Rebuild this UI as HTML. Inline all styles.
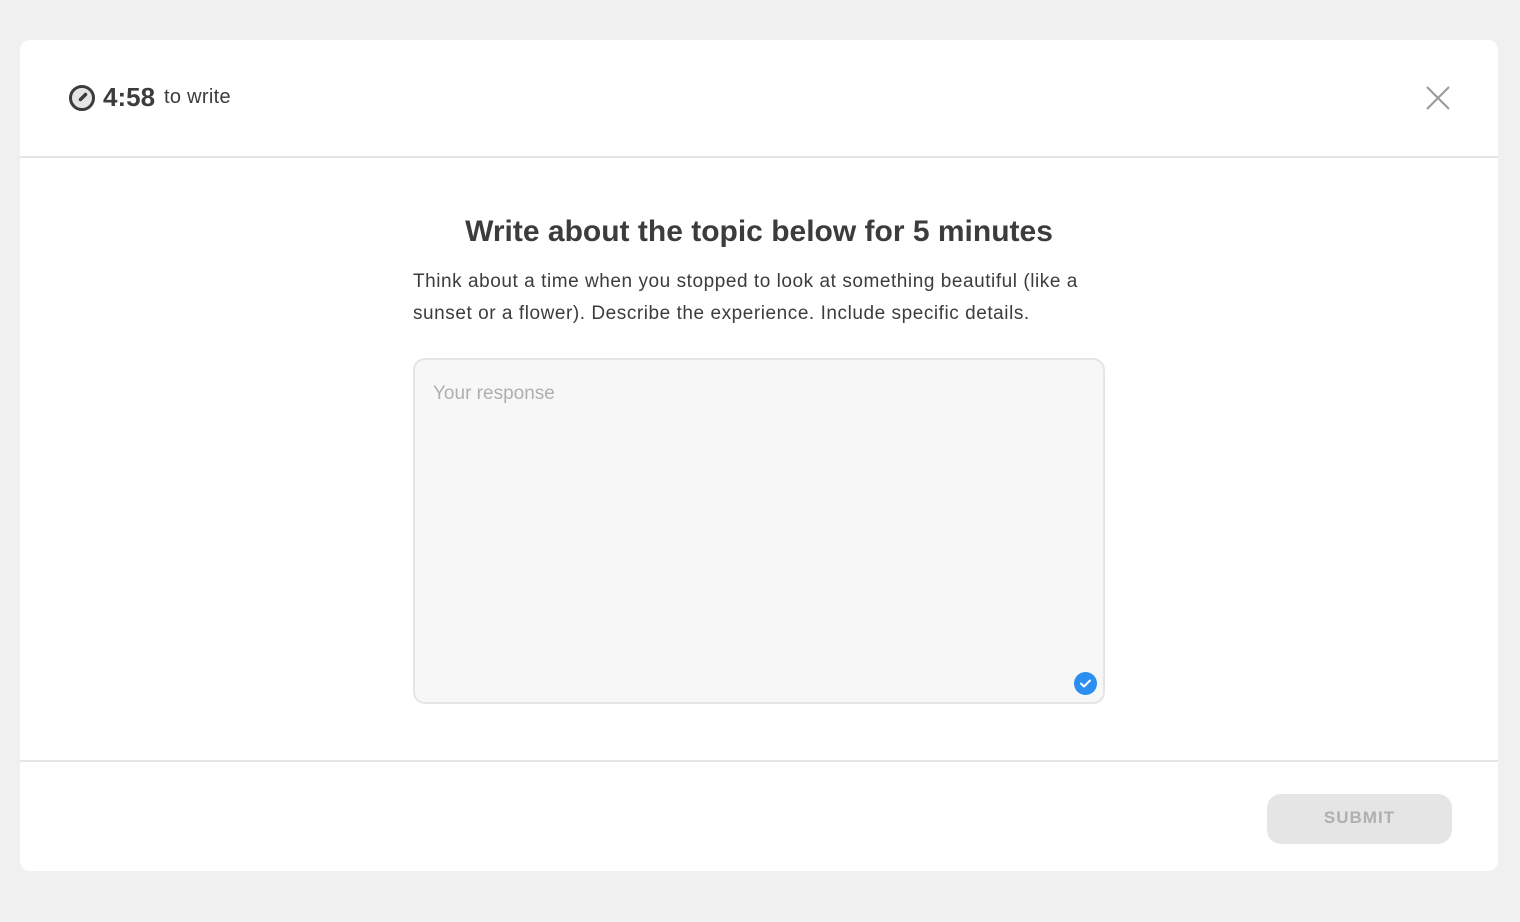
<!DOCTYPE html>
<html><head><meta charset="utf-8"><style>
*{margin:0;padding:0;box-sizing:border-box}
body{width:1520px;height:922px;background:#f0f0f0;font-family:"Liberation Sans",sans-serif;position:relative;overflow:hidden}
.card{position:absolute;left:20px;top:40px;width:1478px;height:831px;background:#fff;border-radius:10px}
.hdr{position:absolute;left:0;top:0;width:100%;height:118px;border-bottom:2px solid #e5e5e5}
.timer{position:absolute;left:48px;top:42px;display:flex;align-items:center;color:#3c3c3c}
.timer b{font-size:26px;margin-left:7px}
.timer span{font-size:20px;margin-left:9px;letter-spacing:0.3px}
.close{position:absolute;left:1406px;top:46px}
h1{position:absolute;left:0;width:100%;top:175px;text-align:center;font-size:30px;color:#3c3c3c;font-weight:bold}
.p{position:absolute;left:393px;top:226px;width:700px;font-size:19px;line-height:32px;color:#3c3c3c;letter-spacing:0.55px}
.ta{position:absolute;left:393px;top:318px;width:692px;height:346px;background:#f7f7f7;border:2px solid #e5e5e5;border-radius:12px}
.ta .ph{position:absolute;left:18px;top:23px;font-size:19px;color:#afafaf}
.chk{position:absolute;left:659px;top:312px;width:23px;height:23px;border-radius:50%;background:#2b8ef0}
.ftr{position:absolute;left:0;top:720px;width:100%;border-top:2px solid #e5e5e5}
.btn{position:absolute;left:1247px;top:754px;width:185px;height:50px;background:#e5e5e5;border-radius:14px;color:#afafaf;font-weight:bold;font-size:17px;letter-spacing:1px;text-align:center;line-height:48px}
</style></head><body>
<div class="card">
<div class="hdr">
<div class="timer">
<svg width="28" height="28" viewBox="0 0 28 28"><circle cx="14" cy="14" r="11.5" fill="#e5e5e5" stroke="#3c3c3c" stroke-width="3"/><path d="M12.5 15.5 L17.5 10.5" stroke="#3c3c3c" stroke-width="3.5" stroke-linecap="round"/></svg>
<b>4:58</b><span>to write</span></div>
<svg class="close" width="24" height="24" viewBox="0 0 24 24"><path d="M1 1L23 23M23 1L1 23" stroke="#999" stroke-width="2"/></svg>
</div>
<h1>Write about the topic below for 5 minutes</h1>
<div class="p">Think about a time when you stopped to look at something beautiful (like a<br>sunset or a flower). Describe the experience. Include specific details.</div>
<div class="ta"><div class="ph">Your response</div>
<div class="chk"><svg width="23" height="23" viewBox="0 0 23 23"><path d="M7 11.5l3 3 6-6" fill="none" stroke="#fff" stroke-width="2" stroke-linecap="round" stroke-linejoin="round"/></svg></div></div>
<div class="ftr"></div>
<div class="btn">SUBMIT</div>
</div>
</body></html>
